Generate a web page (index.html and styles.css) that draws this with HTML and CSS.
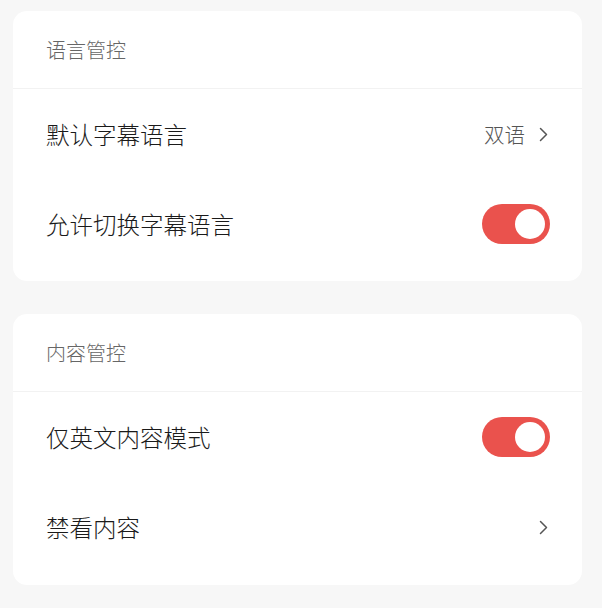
FILE: index.html
```html
<!DOCTYPE html>
<html lang="zh-CN">
<head>
  <meta charset="UTF-8" />
  <meta name="viewport" content="width=device-width, initial-scale=1.0"/>
  <title>字幕与内容设置</title>
  <link rel="stylesheet" href="styles.css">
</head>
<body>
  <div class="page">
    <div class="card">
      <div class="card-title">语言管控</div>
      <div class="row">
        <span class="row-label">默认字幕语言</span>
        <span class="row-extra">
          <span class="row-value">双语</span>
          <svg class="chevron" width="9" height="15" viewBox="0 0 9 15"><polyline points="1.5,1.5 7.5,7.5 1.5,13.5" fill="none" stroke="#555" stroke-width="1.5" stroke-linecap="round" stroke-linejoin="round"/></svg>
        </span>
      </div>
      <div class="row">
        <span class="row-label">允许切换字幕语言</span>
        <span class="switch on"><span class="knob"></span></span>
      </div>
    </div>

    <div class="card">
      <div class="card-title">内容管控</div>
      <div class="row">
        <span class="row-label">仅英文内容模式</span>
        <span class="switch on"><span class="knob"></span></span>
      </div>
      <div class="row">
        <span class="row-label">禁看内容</span>
        <span class="row-extra">
          <svg class="chevron" width="9" height="15" viewBox="0 0 9 15"><polyline points="1.5,1.5 7.5,7.5 1.5,13.5" fill="none" stroke="#555" stroke-width="1.5" stroke-linecap="round" stroke-linejoin="round"/></svg>
        </span>
      </div>
    </div>
  </div>
</body>
</html>
```

FILE: styles.css
```css
body {
  margin: 0;
  background-color: #f7f7f7;
  font-family: "Noto Sans CJK SC", "Noto Sans", sans-serif;
  font-weight: 300;
  color: #1a1a1a;
}
.page {
  display: flex;
  flex-direction: column;
  gap: 33px;
  padding: 11px 20px 0 13px;
}
.card {
  background: #fff;
  border-radius: 14px;
  padding-bottom: 12px;
}
.card + .card {
  padding-bottom: 13px;
}
.card-title {
  height: 77px;
  display: flex;
  align-items: center;
  padding: 0 33px;
  font-size: 20px;
  color: #666;
  border-bottom: 1px solid #f2f2f2;
}
.row {
  height: 90px;
  display: flex;
  align-items: center;
  justify-content: space-between;
  padding: 0 33px;
}
.row-label {
  font-size: 23.5px;
}
.row-extra {
  display: flex;
  align-items: center;
  gap: 14px;
}
.row-value {
  font-size: 20.5px;
  color: #555;
}
.chevron {
  display: block;
  margin-right: 1px;
}
.switch {
  width: 68px;
  height: 40px;
  border-radius: 20px;
  background-color: #ea524d;
  display: flex;
  align-items: center;
  justify-content: flex-end;
  padding: 0 5px;
  box-sizing: border-box;
  margin-right: -1px;
}
.knob {
  width: 30px;
  height: 30px;
  border-radius: 50%;
  background: #fff;
}
```
